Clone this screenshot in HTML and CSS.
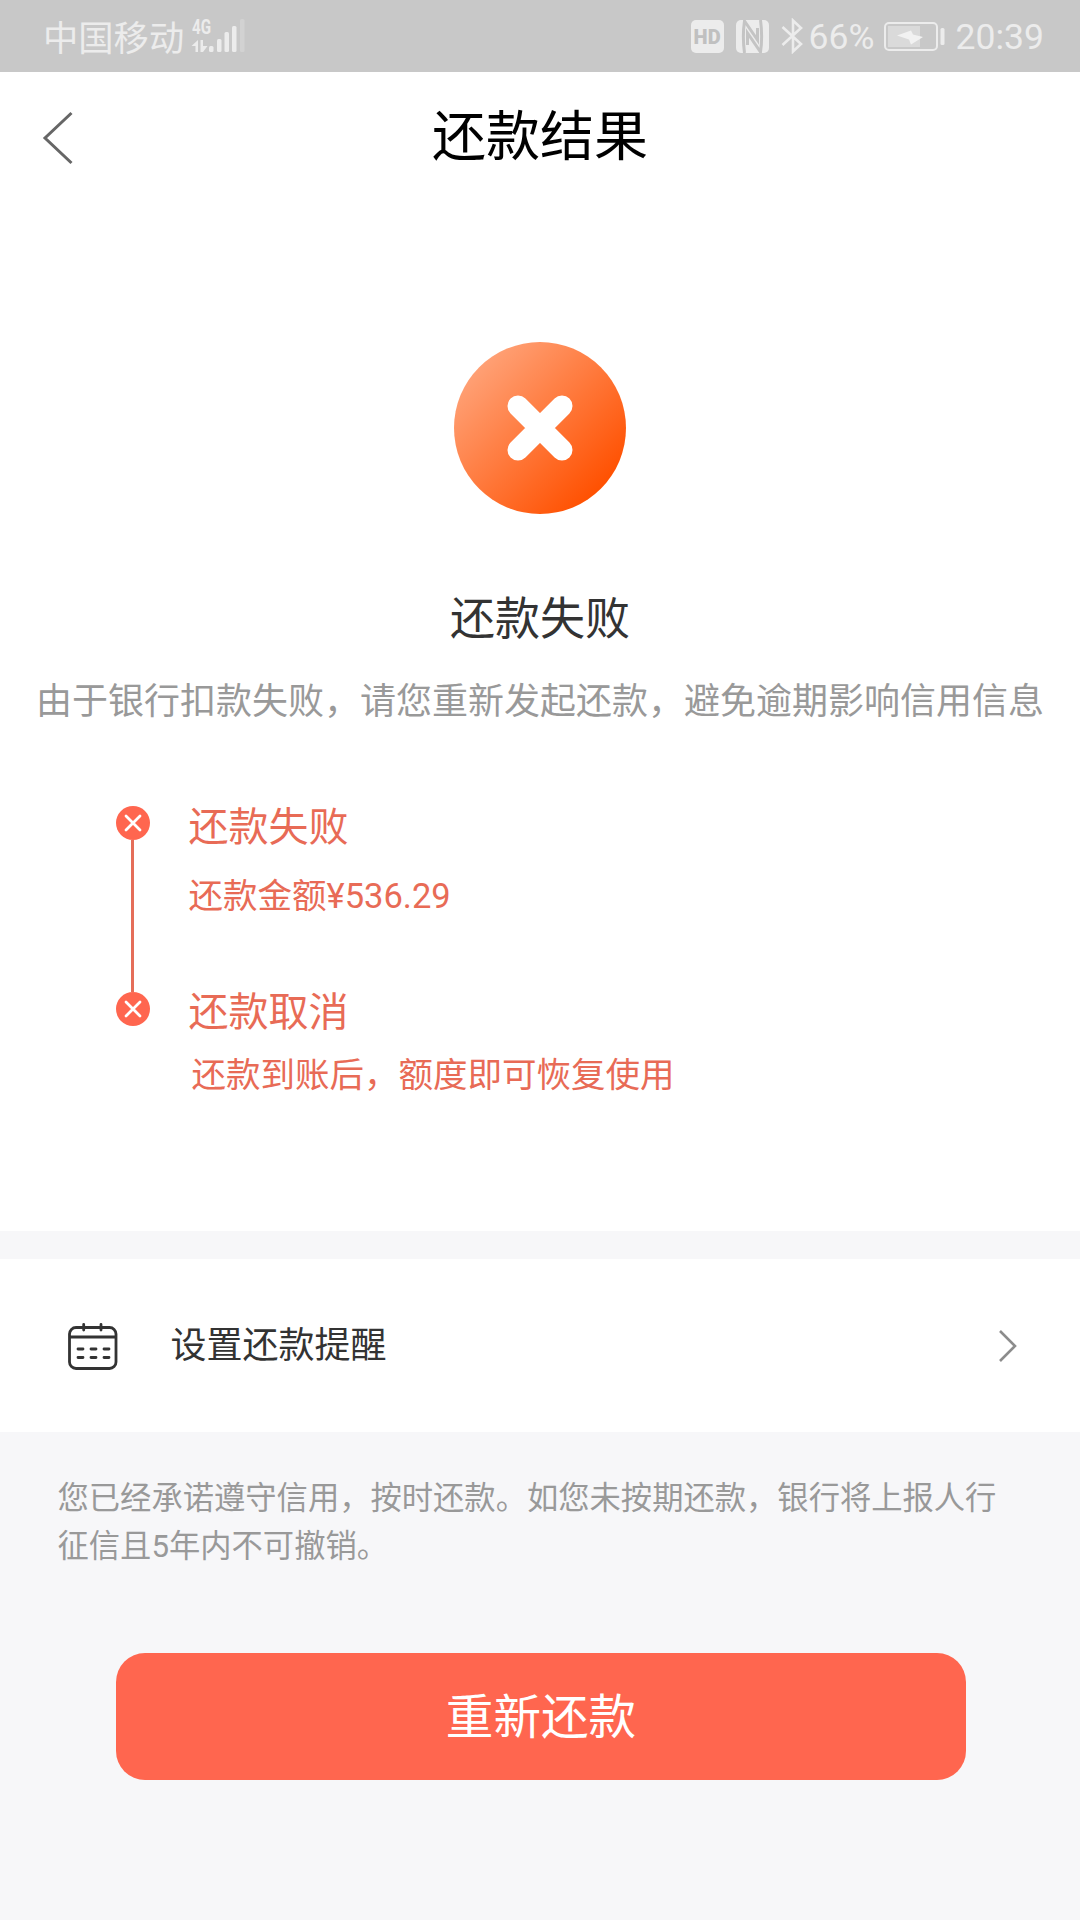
FILE: index.html
```html
<!DOCTYPE html>
<html lang="zh-CN">
<head>
<meta charset="utf-8">
<title>还款结果</title>
<link rel="stylesheet" href="styles.css">
</head>
<body>
<div class="status-bar">
  <span class="carrier">中国移动</span>
  <div class="network">
    <span class="network-type">4G</span>
    <svg class="signal" width="54" height="36" viewBox="0 0 54 36">
      <path d="M7 22V34H4.500V28H0.500ZM9.500 22H12V28H16.500L12 34H9.500Z" fill="#ececec"/>
      <rect x="18" y="28" width="4.500" height="6" rx="1.500" fill="#ececec"/>
      <rect x="26" y="21" width="4.500" height="13" rx="1.500" fill="#ececec"/>
      <rect x="33.500" y="14" width="4.500" height="20" rx="1.500" fill="#ececec"/>
      <rect x="41" y="8" width="4.500" height="26" rx="1.500" fill="#ececec"/>
      <rect x="49" y="1" width="4.500" height="33" rx="1.500" fill="#d2d2d2"/>
    </svg>
  </div>
  <div class="indicators">
    <span class="hd">HD</span>
    <svg class="nfc" width="33" height="33" viewBox="0 0 33 33">
      <rect width="33" height="33" rx="5" fill="#ececec"/>
      <path d="M8.500 33C7 22 7 11 8.500 1L21.500 20V8M24.500 0C26 11 26 22 24.500 32L11.500 13V25" fill="none" stroke="#c4c4c4" stroke-width="3"/>
    </svg>
    <svg class="bluetooth" width="22" height="36" viewBox="0 0 22 36">
      <path d="M1.500 9L20 26L12 33.500V2.500L20 10L1.500 27" fill="none" stroke="#ececec" stroke-width="2.600"/>
    </svg>
    <span class="percent">66%</span>
    <svg class="battery" width="61" height="29" viewBox="0 0 61 29">
      <rect x="1" y="1" width="52" height="27" rx="4" fill="none" stroke="#ececec" stroke-width="2"/>
      <rect x="4" y="4" width="32" height="21" fill="#dadada"/>
      <path d="M13 13.500L27 8.500L29 12.500L39 15L27 22.500L25 17.500Z" fill="#f2f2f2"/>
      <rect x="56.500" y="6" width="4" height="17" rx="1.500" fill="#ececec"/>
    </svg>
    <span class="clock">20:39</span>
  </div>
</div>

<header class="nav">
  <svg class="back" width="32" height="54" viewBox="0 0 32 54">
    <path d="M29.500 2L3 27L29.500 52" fill="none" stroke="#666" stroke-width="3"/>
  </svg>
  <h1 class="nav-title">还款结果</h1>
</header>

<main class="result">
  <svg class="result-icon" width="172" height="172" viewBox="0 0 172 172">
    <defs>
      <linearGradient id="orange" x1="0.100" y1="0.100" x2="0.860" y2="0.860">
        <stop offset="0" stop-color="#ffa57c"/>
        <stop offset="1" stop-color="#ff5000"/>
      </linearGradient>
    </defs>
    <circle cx="86" cy="86" r="86" fill="url(#orange)"/>
    <path d="M64 64L108 108M108 64L64 108" stroke="#fff" stroke-width="21" stroke-linecap="round"/>
  </svg>
  <h2 class="result-title">还款失败</h2>
  <p class="result-desc">由于银行扣款失败，请您重新发起还款，避免逾期影响信用信息</p>

  <ol class="steps">
    <li class="step">
      <div class="marker">
        <svg width="34" height="34" viewBox="0 0 34 34">
          <circle cx="17" cy="17" r="17" fill="#ff664f"/>
          <path d="M10 10L24 24M24 10L10 24" stroke="#fff" stroke-width="2.800" stroke-linecap="round"/>
        </svg>
        <span class="line"></span>
      </div>
      <div class="step-body">
        <div class="step-title">还款失败</div>
        <div class="step-text amount">还款金额¥536.29</div>
      </div>
    </li>
    <li class="step">
      <div class="marker">
        <svg width="34" height="34" viewBox="0 0 34 34">
          <circle cx="17" cy="17" r="17" fill="#ff664f"/>
          <path d="M10 10L24 24M24 10L10 24" stroke="#fff" stroke-width="2.800" stroke-linecap="round"/>
        </svg>
      </div>
      <div class="step-body">
        <div class="step-title">还款取消</div>
        <div class="step-text recover">还款到账后，额度即可恢复使用</div>
      </div>
    </li>
  </ol>
</main>

<section class="reminder">
  <svg class="calendar" width="50" height="48" viewBox="0 0 50 48">
    <g fill="none" stroke="#333" stroke-width="2.800">
      <rect x="1.500" y="4.500" width="46.500" height="41" rx="6.500"/>
      <path d="M2 14H48"/>
      <path d="M15.700 1.500V7M33 1.500V7" stroke-linecap="round"/>
      <path d="M10 26H15M23 26H28M36 26H41M10 34.500H15M23 34.500H28M36 34.500H41" stroke-linecap="round"/>
    </g>
  </svg>
  <span class="reminder-label">设置还款提醒</span>
  <svg class="arrow" width="20" height="34" viewBox="0 0 20 34">
    <path d="M2 2L17 17L2 32" fill="none" stroke="#8c8c8c" stroke-width="2.600"/>
  </svg>
</section>

<footer class="footer">
  <p class="note">您已经承诺遵守信用，按时还款。如您未按期还款，银行将上报人行征信且5年内不可撤销。</p>
  <button class="retry" type="button">重新还款</button>
</footer>
</body>
</html>
```
FILE: styles.css
```css
* {
  box-sizing: border-box;
  margin: 0;
  padding: 0;
}

body {
  width: 1080px;
  min-height: 1920px;
  background: #f7f7f9;
  font-family: Roboto, "Noto Sans CJK SC", sans-serif;
  font-weight: 400;
  color: #333;
}

svg {
  display: block;
  flex: none;
}

h1,
h2 {
  font-weight: 400;
}

.status-bar {
  display: flex;
  align-items: center;
  height: 72px;
  padding: 0 36px 0 43px;
  background: #c8c8c8;
  color: #ececec;
  white-space: nowrap;
}

.carrier {
  width: 148px;
  font-size: 35.3px;
  line-height: 48px;
  padding-top: 6px;
}

.network {
  position: relative;
}

.network-type {
  position: absolute;
  left: 1px;
  top: -1px;
  font-size: 20px;
  font-weight: 700;
  line-height: 20px;
  transform: scaleX(0.76);
  transform-origin: left;
}

.indicators {
  display: flex;
  align-items: center;
  margin-left: auto;
}

.hd {
  width: 33px;
  height: 33px;
  border-radius: 5px;
  background: #ececec;
  color: #c0c0c0;
  font-size: 20px;
  font-weight: 900;
  line-height: 34px;
  text-align: center;
}

.nfc {
  margin-left: 12px;
}

.bluetooth {
  margin-left: 12px;
}

.percent {
  width: 75px;
  margin-left: 6px;
  font-size: 35.5px;
  line-height: 42px;
  padding-top: 2px;
}

.clock {
  margin-left: 11px;
  font-size: 35.5px;
  line-height: 42px;
  padding-top: 2px;
}

.nav {
  display: grid;
  grid-template-columns: 120px 1fr 120px;
  align-items: center;
  height: 132px;
  background: #fff;
}

.back {
  margin-left: 42px;
}

.nav-title {
  color: #000;
  font-size: 54px;
  line-height: 66px;
  text-align: center;
}

.result {
  display: flex;
  flex-direction: column;
  align-items: center;
  height: 1027px;
  padding-top: 138px;
  background: #fff;
}

.result-title {
  margin-top: 76px;
  font-size: 45px;
  line-height: 60px;
}

.result-desc {
  margin-top: 27px;
  color: #999;
  font-size: 36px;
  line-height: 50px;
  white-space: nowrap;
}

.steps {
  align-self: stretch;
  margin-top: 79px;
  padding-left: 116px;
  list-style: none;
}

.step {
  display: flex;
  color: #e86b56;
}

.step:first-child {
  height: 186px;
}

.marker {
  display: flex;
  flex-direction: column;
  align-items: center;
  width: 34px;
}

.line {
  flex: 1;
  width: 3px;
  margin-right: 1px;
  background: #e56e59;
}

.step-body {
  margin-left: 38.5px;
}

.step:first-child .step-body {
  padding-top: 1px;
}

.step-title {
  font-size: 40px;
  line-height: 42px;
}

.step-text {
  font-size: 34.5px;
  line-height: 40px;
  white-space: nowrap;
}

.amount {
  margin-top: 27px;
}

.recover {
  margin-top: 21px;
  padding-left: 3px;
}

.reminder {
  display: flex;
  align-items: center;
  height: 173px;
  margin-top: 28px;
  padding: 0 62px 0 68px;
  background: #fff;
}

.calendar {
  margin-top: 2px;
}

.reminder-label {
  margin-left: 52.5px;
  font-size: 36px;
  line-height: 48px;
}

.arrow {
  margin-left: auto;
}

.footer {
  padding: 43px 114px 0 57.5px;
}

.note {
  width: 960px;
  height: 96px;
  color: #999;
  font-size: 31.3px;
  line-height: 48px;
}

.retry {
  display: block;
  width: 850px;
  height: 127px;
  margin: 82px 0 0 58.5px;
  padding-bottom: 7px;
  border: 0;
  border-radius: 29px;
  background: #ff664f;
  color: #fff;
  font: inherit;
  font-size: 47.6px;
}
```
